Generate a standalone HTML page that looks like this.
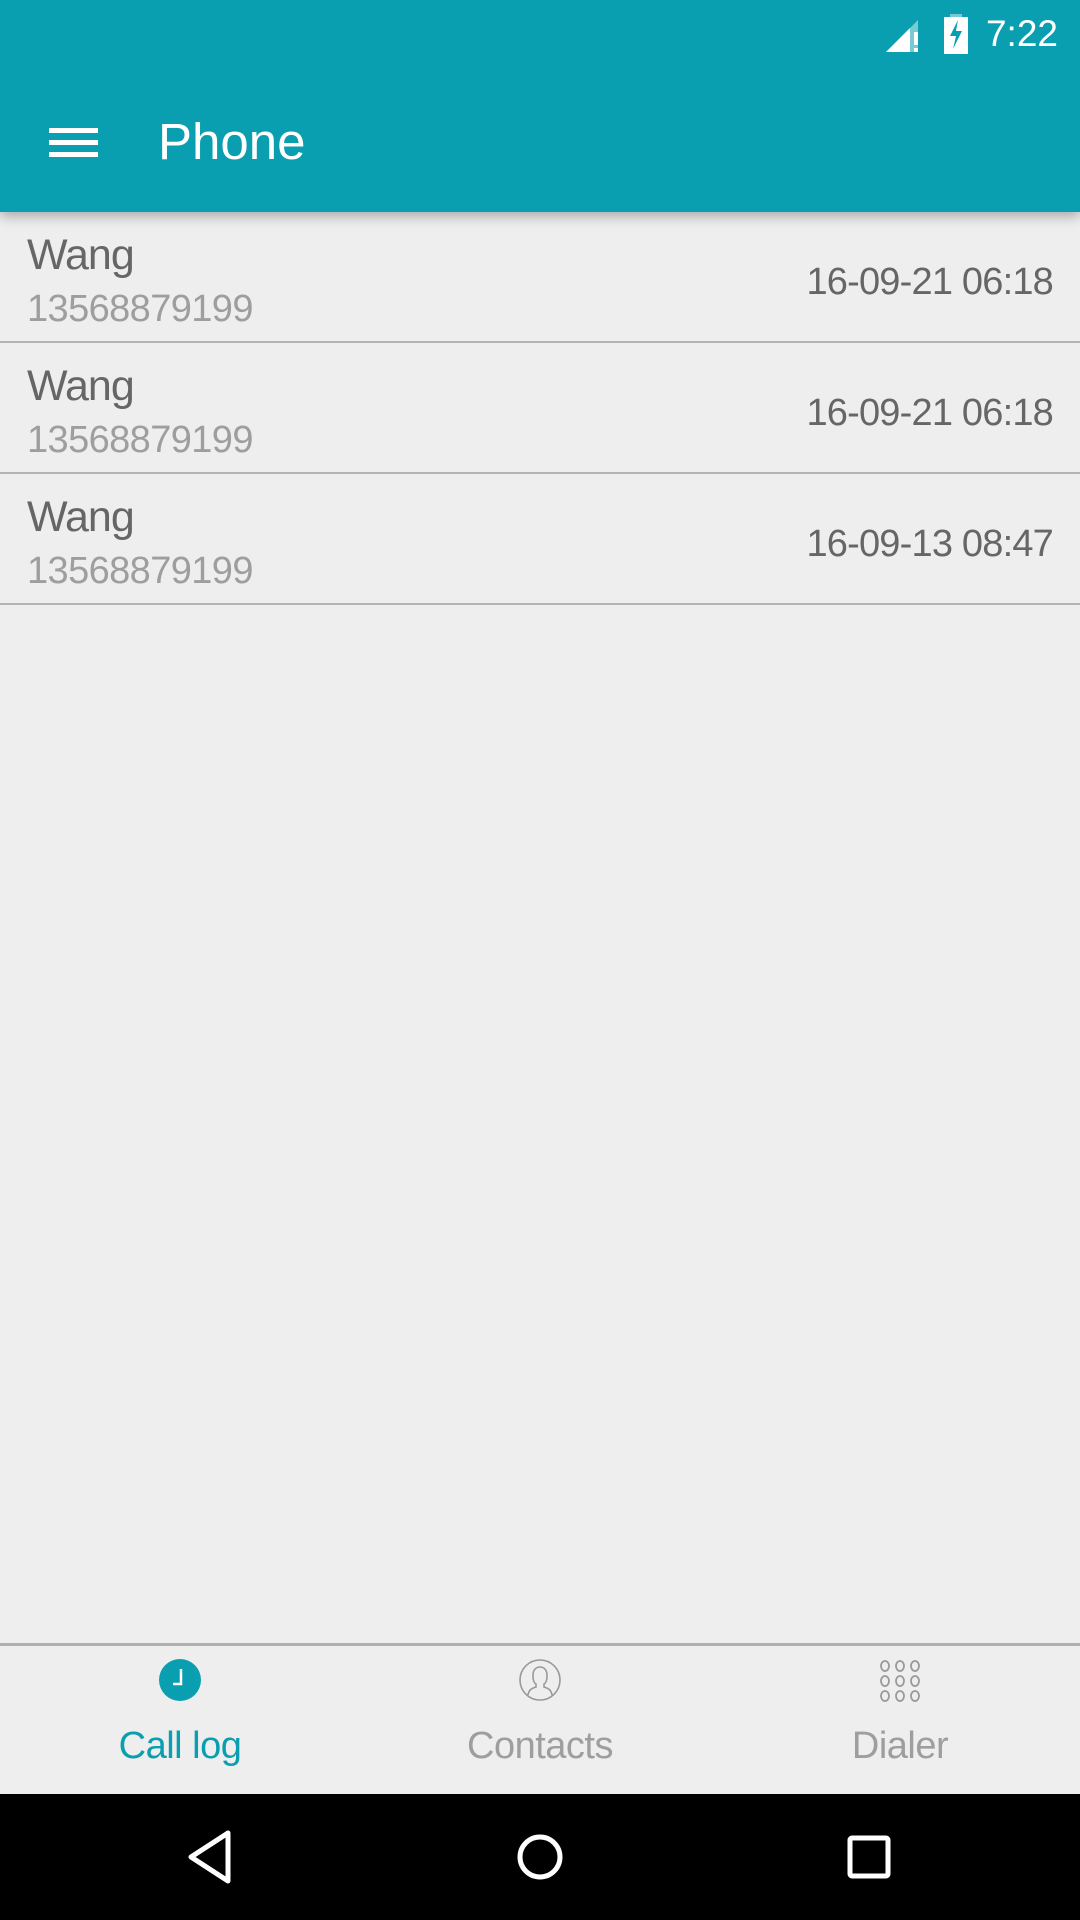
<!DOCTYPE html>
<html><head><meta charset="utf-8"><style>
*{margin:0;padding:0;box-sizing:border-box}
body{width:1080px;height:1920px;background:#eeeeee;font-family:"Liberation Sans",Roboto,sans-serif;position:relative;overflow:hidden}
.top{position:absolute;left:0;top:0;width:1080px;height:212px;background:#0a9fb0;box-shadow:0 4px 12px rgba(0,0,0,.3);z-index:2}
.abs{position:absolute}
.row{position:absolute;left:0;width:1080px;height:131px;border-bottom:2px solid #b4b4b4}
.name{position:absolute;left:27px;top:19px;font-size:43px;color:#666;letter-spacing:-1px}
.num{position:absolute;left:27px;top:76px;font-size:38px;color:#9e9e9e;letter-spacing:-0.6px}
.time{position:absolute;right:27px;top:49px;font-size:38px;color:#666;letter-spacing:-0.8px}
.lbl{position:absolute;top:1725px;font-size:38px;color:#9e9e9e;width:300px;text-align:center;letter-spacing:-0.5px}
</style></head><body>
<div class="top">
  <svg class="abs" style="left:884px;top:14px" width="40" height="40" viewBox="0 0 40 40">
    <polygon points="2,38 34,6 34,38" fill="#fff" opacity=".45"/>
    <polygon points="2,38 26,14 26,38" fill="#fff"/>
    <rect x="30" y="18" width="4" height="13" fill="#fff"/><rect x="30" y="34" width="4" height="4" fill="#fff"/>
  </svg>
  <svg class="abs" style="left:942px;top:14px" width="28" height="40" viewBox="0 0 28 40">
    <rect x="8" y="0" width="12" height="4" fill="#fff" opacity=".45"/>
    <rect x="2" y="3" width="24" height="37" fill="#fff"/>
    <rect x="2" y="3" width="24" height="12" fill="#fff" opacity=".55"/>
    <polygon points="16,6 8,22 14,22 11,35 20,17 14,17" fill="#0a9fb0"/>
  </svg>
  <div class="abs" style="right:22px;top:13px;font-size:37px;color:#fff">7:22</div>
  <div class="abs" style="left:49px;top:128px;width:49px;height:5px;background:#fff"></div>
  <div class="abs" style="left:49px;top:140px;width:49px;height:5px;background:#fff"></div>
  <div class="abs" style="left:49px;top:152px;width:49px;height:5px;background:#fff"></div>
  <div class="abs" style="left:158px;top:112px;font-size:51px;color:#fff">Phone</div>
</div>
<div class="row" style="top:212px"><div class="name">Wang</div><div class="num">13568879199</div><div class="time">16-09-21 06:18</div></div>
<div class="row" style="top:343px"><div class="name">Wang</div><div class="num">13568879199</div><div class="time">16-09-21 06:18</div></div>
<div class="row" style="top:474px"><div class="name">Wang</div><div class="num">13568879199</div><div class="time">16-09-13 08:47</div></div>

<div class="abs" style="left:0;top:1643px;width:1080px;height:3px;background:#b0b0b0"></div>
<svg class="abs" style="left:159px;top:1659px" width="42" height="42" viewBox="0 0 42 42">
  <circle cx="21" cy="21" r="21" fill="#0a9fb0"/>
  <path d="M22 10V25H14" stroke="#fff" stroke-width="2.5" fill="none"/>
</svg>
<svg class="abs" style="left:519px;top:1659px" width="42" height="42" viewBox="0 0 42 42" fill="none" stroke="#999" stroke-width="1.6">
  <circle cx="21" cy="21" r="20"/>
  <path d="M9 36C10 30 14 29 17 28V25C14 23 14 19 14 16C14 11 17 8 21 8S28 11 28 16C28 19 28 23 25 25V28C28 29 32 30 33 36"/>
</svg>
<svg class="abs" style="left:878px;top:1659px" width="44" height="44" viewBox="0 0 44 44" fill="none" stroke="#999" stroke-width="1.8">
  <ellipse cx="7" cy="7" rx="4" ry="5"/><ellipse cx="22" cy="7" rx="4" ry="5"/><ellipse cx="37" cy="7" rx="4" ry="5"/>
  <ellipse cx="7" cy="22" rx="4" ry="5"/><ellipse cx="22" cy="22" rx="4" ry="5"/><ellipse cx="37" cy="22" rx="4" ry="5"/>
  <ellipse cx="7" cy="37" rx="4" ry="5"/><ellipse cx="22" cy="37" rx="4" ry="5"/><ellipse cx="37" cy="37" rx="4" ry="5"/>
</svg>
<div class="lbl" style="left:30px;color:#0a9fb0">Call log</div>
<div class="lbl" style="left:390px">Contacts</div>
<div class="lbl" style="left:750px">Dialer</div>

<div class="abs" style="left:0;top:1794px;width:1080px;height:126px;background:#000"></div>
<svg class="abs" style="left:185px;top:1830px" width="50" height="54" viewBox="0 0 50 54" fill="none" stroke="#fff" stroke-width="5" stroke-linejoin="round">
  <polygon points="43,3 43,51 6,27"/>
</svg>
<svg class="abs" style="left:516px;top:1833px" width="48" height="48" viewBox="0 0 48 48" fill="none" stroke="#fff" stroke-width="5"><circle cx="24" cy="24" r="20"/></svg>
<svg class="abs" style="left:847px;top:1835px" width="44" height="44" viewBox="0 0 44 44" fill="none" stroke="#fff" stroke-width="5"><rect x="3" y="3" width="38" height="38" rx="2"/></svg>
</body></html>
